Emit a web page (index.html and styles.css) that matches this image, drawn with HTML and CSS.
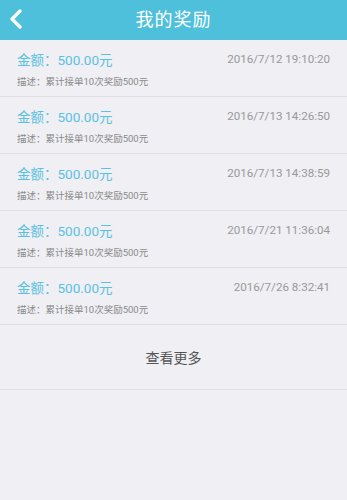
FILE: index.html
```html
<!DOCTYPE html>
<html lang="zh">
<head>
<meta charset="utf-8">
<link rel="stylesheet" href="styles.css">
</head>
<body>
<header class="topbar">
  <span class="back"><svg width="14" height="20" viewBox="0 0 14 20"><path d="M11 2 L3 10 L11 18" fill="none" stroke="#fff" stroke-width="3.2" stroke-linecap="round" stroke-linejoin="round"/></svg></span>
  <h1 class="title">我的奖励</h1>
</header>
<ul class="list">
  <li class="item">
    <div class="line"><span class="amount">金额：500.00元</span><span class="date">2016/7/12 19:10:20</span></div>
    <div class="desc">描述：累计接单10次奖励500元</div>
  </li>
  <li class="item">
    <div class="line"><span class="amount">金额：500.00元</span><span class="date">2016/7/13 14:26:50</span></div>
    <div class="desc">描述：累计接单10次奖励500元</div>
  </li>
  <li class="item">
    <div class="line"><span class="amount">金额：500.00元</span><span class="date">2016/7/13 14:38:59</span></div>
    <div class="desc">描述：累计接单10次奖励500元</div>
  </li>
  <li class="item">
    <div class="line"><span class="amount">金额：500.00元</span><span class="date">2016/7/21 11:36:04</span></div>
    <div class="desc">描述：累计接单10次奖励500元</div>
  </li>
  <li class="item">
    <div class="line"><span class="amount">金额：500.00元</span><span class="date">2016/7/26 8:32:41</span></div>
    <div class="desc">描述：累计接单10次奖励500元</div>
  </li>
</ul>
<div class="more">查看更多</div>
</body>
</html>
```
FILE: styles.css
```css
html, body {
  margin: 0;
  padding: 0;
  background: #efeff4;
  font-family: Roboto, "Noto Sans CJK SC", sans-serif;
  height: 500px;
  overflow: hidden;
}
.topbar {
  height: 40px;
  background: #4ec0db;
  display: flex;
  align-items: center;
  justify-content: center;
  position: relative;
}
.back {
  position: absolute;
  left: 9px;
  top: 9px;
  display: flex;
}
.title {
  margin: 0;
  color: #fff;
  font-size: 18px;
  font-weight: normal;
  line-height: 40px;
  letter-spacing: 1px;
}
.list {
  list-style: none;
  margin: 0;
  padding: 0;
}
.item {
  height: 56px;
  border-bottom: 1px solid #dfdfe3;
  padding: 0 17px;
  box-sizing: content-box;
  display: flex;
  flex-direction: column;
}
.line {
  display: flex;
  justify-content: space-between;
  align-items: center;
  margin-top: 10px;
  height: 18px;
}
.amount {
  color: #5bc1e0;
  font-size: 13.5px;
}
.date {
  color: #999;
  font-size: 11.6px;
}
.desc {
  margin-top: 8px;
  color: #8a8a8a;
  font-size: 9.5px;
  line-height: 12px;
}
.more {
  height: 64px;
  border-bottom: 1px solid #dfdfe3;
  display: flex;
  align-items: center;
  justify-content: center;
  color: #555;
  font-size: 14px;
}
```
